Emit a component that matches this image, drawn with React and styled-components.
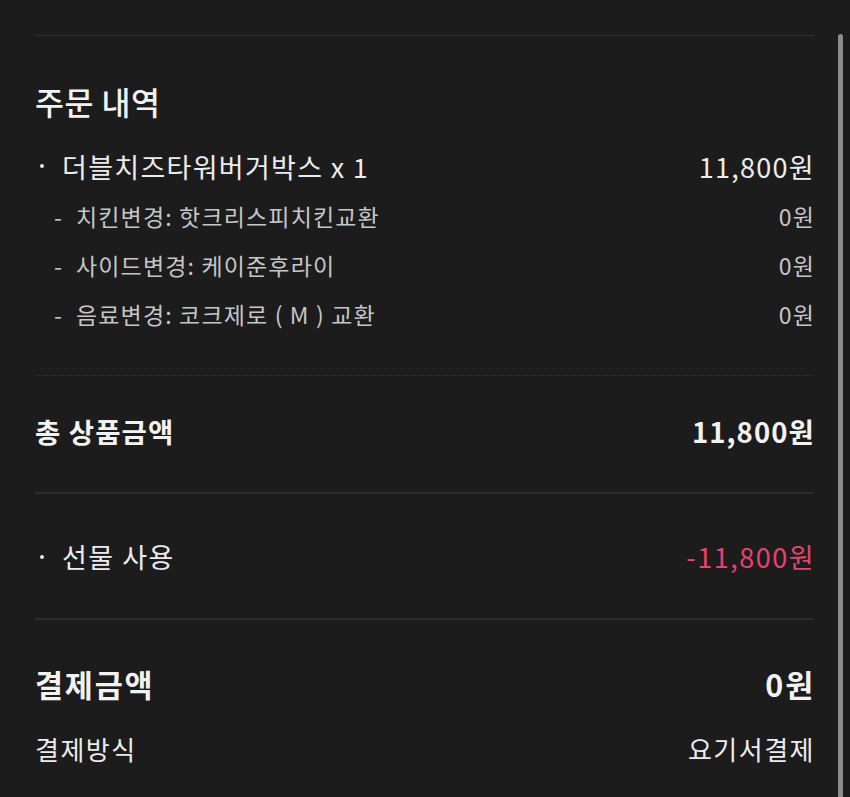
import React from "react";
import styled, { createGlobalStyle } from "styled-components";

const Global = createGlobalStyle`
  html, body {
    margin: 0;
    padding: 0;
    background: #1c1c1c;
  }
  body {
    font-family: "Noto Sans CJK KR", "Noto Sans", sans-serif;
    color: #ececec;
  }
`;

const Page = styled.div`
  position: relative;
  min-height: 797px;
  padding: 35px 36px 0 35px;
  box-sizing: border-box;
  overflow: hidden;
`;

const Section = styled.section`
  border-top: ${(p) => p.$rule || "1px solid #2f2f2f"};
  padding-top: ${(p) => p.$top}px;
  padding-bottom: ${(p) => p.$bottom || 0}px;
  display: flex;
  flex-direction: column;
`;

const Title = styled.h2`
  margin: 0 0 20px;
  font-size: 31.5px;
  line-height: 40px;
  font-weight: 500;
  letter-spacing: 0.5px;
  color: #f2f2f2;
`;

const Row = styled.div`
  display: flex;
  align-items: center;
  justify-content: space-between;
  height: ${(p) => p.$h}px;
  margin-top: ${(p) => p.$gap || 0}px;
  font-size: ${(p) => p.$size}px;
  font-weight: ${(p) => p.$weight || 400};
  color: ${(p) => p.$color || "#ececec"};
  letter-spacing: ${(p) => p.$ls ?? 1.2}px;
`;

const Label = styled.span`
  display: flex;
  align-items: center;
  padding-left: ${(p) => p.$indent || 0}px;
`;

const Dot = styled.span`
  width: 4px;
  height: 4px;
  border-radius: 50%;
  background: #e6e6e6;
  margin: 0 18px 0 5px;
`;

const Dash = styled.span`
  width: 22px;
  flex: none;
`;

const Amount = styled.span`
  color: ${(p) => p.$color || "inherit"};
  margin-right: -1px;
`;

const Scrollbar = styled.div`
  position: absolute;
  right: 7px;
  top: 34px;
  bottom: -10px;
  width: 5px;
  border-radius: 3px;
  background: #8c8c8c;
`;

const subs = [
  ["치킨변경: 핫크리스피치킨교환", "0원"],
  ["사이드변경: 케이준후라이", "0원"],
  ["음료변경: 코크제로 ( M ) 교환", "0원"],
];

export default function App() {
  return (
    <>
      <Global />
      <Page>
        <Section $top={45} $bottom={37}>
          <Title>주문 내역</Title>
          <Row $h={50} $size={27} $ls={1.3}>
            <Label>
              <Dot />
              더블치즈타워버거박스 x 1
            </Label>
            <Amount>11,800원</Amount>
          </Row>
          {subs.map(([l, a]) => (
            <Row key={l} $h={49} $size={23} $ls={1.15} $color="#c6c6c6">
              <Label $indent={19}>
                <Dash>-</Dash>
                {l}
              </Label>
              <Amount>{a}</Amount>
            </Row>
          ))}
        </Section>
        <Section $rule="1px dotted #353535" $top={35} $bottom={41}>
          <Row $h={40} $size={27.5} $ls={1.1} $weight={700} $color="#f2f2f2">
            <Label>총 상품금액</Label>
            <Amount>11,800원</Amount>
          </Row>
        </Section>
        <Section $rule="2px solid #2c2c2c" $top={42} $bottom={41}>
          <Row $h={41} $size={27} $ls={1.5}>
            <Label>
              <Dot />
              선물 사용
            </Label>
            <Amount $color="#e8426f">-11,800원</Amount>
          </Row>
        </Section>
        <Section $rule="2px solid #2c2c2c" $top={42}>
          <Row $h={44} $size={30.5} $ls={1.8} $weight={700} $color="#f2f2f2">
            <Label>결제금액</Label>
            <Amount>0원</Amount>
          </Row>
          <Row $h={40} $size={26} $ls={1.5} $gap={22}>
            <Label>결제방식</Label>
            <Amount>요기서결제</Amount>
          </Row>
        </Section>
        <Scrollbar />
      </Page>
    </>
  );
}
